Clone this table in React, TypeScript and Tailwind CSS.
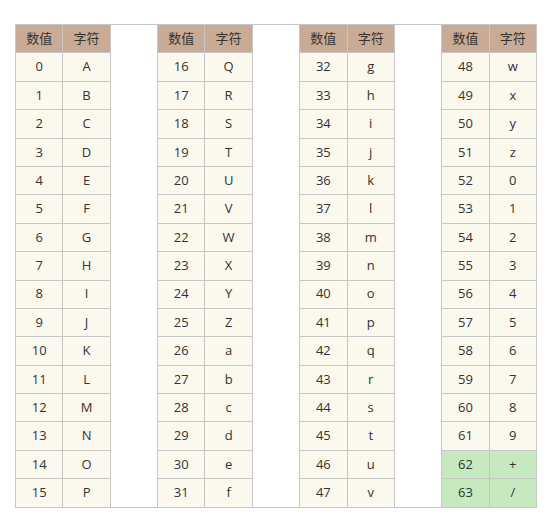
import React from 'react';

const CHARS = 'ABCDEFGHIJKLMNOPQRSTUVWXYZabcdefghijklmnopqrstuvwxyz0123456789+/';

export default function App() {
  const rows = Array.from({ length: 16 }, (_, r) => r);
  const groups = [0, 1, 2, 3];

  return (
    <div className="w-[558px] h-[519px] bg-white pt-[24px] pl-[15px]" style={{ fontFamily: '"Open Sans", "Noto Sans CJK SC", sans-serif' }}>
      <table className="table-fixed border-collapse w-[522px] text-[13px] text-[#333333] text-center">
        <tbody>
          <tr className="h-[28.4px] bg-[#c9ab95]">
            {groups.map((g) => (
              <React.Fragment key={g}>
                <td className="border border-[#c6c6c6]">数值</td>
                <td className="border border-[#c6c6c6]">字符</td>
                {g < 3 && <td rowSpan={17} className="border border-[#c6c6c6] bg-white" />}
              </React.Fragment>
            ))}
          </tr>
          {rows.map((r) => (
            <tr key={r} className="h-[28.4px]">
              {groups.map((g) => {
                const n = g * 16 + r;
                const bg = n >= 62 ? 'bg-[#c6e9c0]' : 'bg-[#fbf8ee]';
                return (
                  <React.Fragment key={g}>
                    <td className={`border border-[#c6c6c6] ${bg}`}>{n}</td>
                    <td className={`border border-[#c6c6c6] ${bg}`}>{CHARS[n]}</td>
                  </React.Fragment>
                );
              })}
            </tr>
          ))}
        </tbody>
      </table>
    </div>
  );
}
